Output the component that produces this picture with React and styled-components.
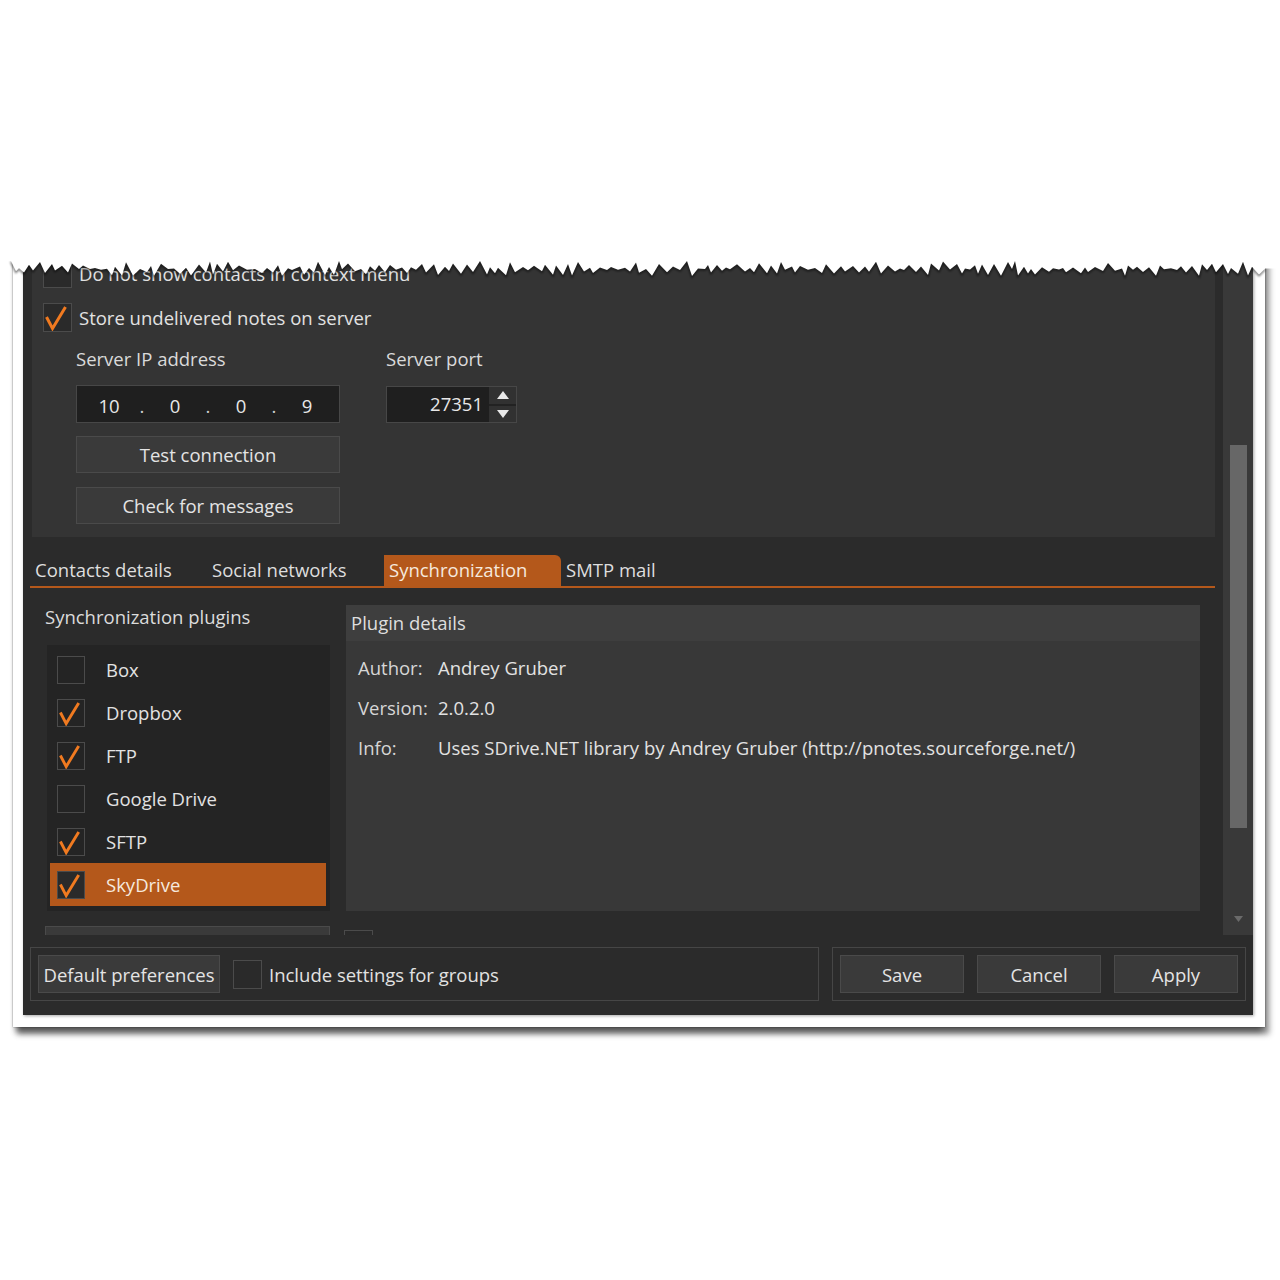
import React from 'react';
import styled, { createGlobalStyle } from 'styled-components';

const ORANGE = '#b4581b';
const PAPER_W = 1252;
const PAGE_LEFT = 13;

const GlobalStyle = createGlobalStyle`
  html, body {
    margin: 0;
    padding: 0;
    background: #ffffff;
  }
  body {
    font-family: "Open Sans", "Noto Sans", "DejaVu Sans", sans-serif;
    font-size: 18.5px;
    color: #e2e2e2;
    min-height: 1280px;
  }
  * {
    box-sizing: border-box;
  }
`;

// jagged line of the torn top edge, in coordinates of the overlay svg
const tornPoints = (() => {
  let seed = 11;
  const rnd = () => {
    seed = (seed * 16807) % 2147483647;
    return seed / 2147483647;
  };
  const pts = [];
  let i = 0;
  for (let x = 0; x <= PAPER_W + 4; x += 3 + Math.round(rnd() * 5)) {
    const y = i % 2 ? 29 + rnd() * 7 : 21 + rnd() * 8;
    pts.push([x + PAGE_LEFT - 2, +y.toFixed(1)]);
    i++;
  }
  return pts;
})();
const tornLine = tornPoints.map(([x, y], i) => `${i ? 'L' : 'M'}${x} ${y}`).join(' ');
const tornFill = `M0 -10 L1280 -10 L1280 ${tornPoints[tornPoints.length - 1][1]} ${tornPoints
  .slice()
  .reverse()
  .map(([x, y]) => `L${x} ${y}`)
  .join(' ')} L0 ${tornPoints[0][1]} Z`;

const Page = styled.div`
  padding: 240px 0 40px ${PAGE_LEFT}px;
  width: ${PAPER_W + PAGE_LEFT + 15}px;
  position: relative;
`;

const Paper = styled.div`
  position: relative;
  width: ${PAPER_W}px;
  background: #ffffff;
  padding: 0 12px 12px 10px;
  box-shadow: 0 0 1.5px rgba(0, 0, 0, 0.5), 4px 7px 6px rgba(0, 0, 0, 0.45), 0 8px 6px -3px rgba(0, 0, 0, 0.4);
`;

const TornEdge = styled.svg`
  position: absolute;
  top: -10px;
  left: -${PAGE_LEFT}px;
  width: 1280px;
  height: 50px;
  display: block;
`;

const Window = styled.div`
  background: #2b2b2b;
  height: 775px;
  display: flex;
  flex-direction: column;
  box-shadow: 1px 1px 3px rgba(0, 0, 0, 0.35);
`;

const ScrollArea = styled.div`
  display: flex;
  height: 695px;
  flex-shrink: 0;
`;

const Viewport = styled.div`
  flex: 1;
  overflow: hidden;
  padding: 0 8px 0 7px;
`;

const Scrollbar = styled.div`
  width: 30px;
  background: #393939;
  display: flex;
  flex-direction: column;
  align-items: center;
  padding-top: 205px;
`;

const Thumb = styled.div`
  width: 17px;
  height: 383px;
  background: #676767;
`;

const ScrollArrow = styled.div`
  margin-top: auto;
  height: 32px;
  display: flex;
  align-items: center;
  justify-content: center;
`;

const SettingsPanel = styled.div`
  margin-left: 2px;
  background: #343434;
  padding: 18px 0 13px 11px;
`;

const CheckRow = styled.div`
  display: flex;
  align-items: center;
  gap: 7px;
  height: 30px;
  margin-bottom: 14px;
  white-space: nowrap;
`;

const Box = styled.span`
  flex-shrink: 0;
  width: ${(p) => p.$size}px;
  height: ${(p) => p.$size}px;
  background: ${(p) => p.$bg || '#2a2a2a'};
  border: 1px solid #4b4b4b;
  display: flex;
  align-items: center;
  justify-content: center;
`;

const CheckBox = ({ checked, size = 29, bg }) => (
  <Box $size={size} $bg={bg}>
    {checked && (
      <svg width={size - 2} height={size - 2} viewBox="0 0 27 27">
        <path d="M2.5 13 L8.5 24.5 L21.5 3" fill="none" stroke="#f07a20" strokeWidth="3" strokeLinecap="butt" strokeLinejoin="miter" />
      </svg>
    )}
  </Box>
);

const ServerFields = styled.div`
  display: flex;
  gap: 46px;
  margin-left: 33px;
`;

const Field = styled.div`
  display: flex;
  flex-direction: column;
  width: ${(p) => p.$width}px;
`;

const FieldLabel = styled.div`
  line-height: 26px;
  margin-bottom: 13px;
  color: #dadada;
  white-space: nowrap;
`;

const IpBox = styled.div`
  height: 38px;
  background: #1f1f1f;
  border: 1px solid #474747;
  display: grid;
  grid-template-columns: 56px 10px 56px 10px 56px 10px 56px;
  align-items: baseline;
  padding: 7px 0 0 4px;
  line-height: 26px;
`;

const IpPart = styled.span`
  text-align: center;
  color: ${(p) => (p.$dot ? '#cfcfcf' : '#e8e8e8')};
`;

const PortBox = styled.div`
  height: 37px;
  margin-top: 1px;
  border: 1px solid #474747;
  display: flex;
`;

const PortValue = styled.div`
  flex: 1;
  background: #1f1f1f;
  text-align: right;
  padding-right: 6px;
  line-height: 34px;
  color: #e8e8e8;
`;

const Spinner = styled.div`
  width: 27px;
  background: #313131;
  display: flex;
  flex-direction: column;
`;

const SpinHalf = styled.div`
  flex: 1;
  display: flex;
  align-items: center;
  justify-content: center;
  border-top: ${(p) => (p.$lower ? '2px solid #222' : 'none')};
`;

const Button = styled.button`
  height: ${(p) => p.$height || 37}px;
  width: ${(p) => (p.$width ? `${p.$width}px` : '100%')};
  margin-top: ${(p) => p.$top || 0}px;
  background: #3a3a3a;
  border: 1px solid #4a4a4a;
  color: #e4e4e4;
  font: inherit;
  padding: 0;
  flex-shrink: 0;
  white-space: nowrap;
`;

const TabStrip = styled.div`
  display: flex;
  margin-top: 18px;
  height: 33px;
  border-bottom: 2px solid ${ORANGE};
`;

const Tab = styled.div`
  width: 177px;
  height: 31px;
  line-height: 29px;
  padding-left: 5px;
  white-space: nowrap;
  background: ${(p) => (p.$active ? ORANGE : 'transparent')};
  color: ${(p) => (p.$active ? '#f6e9de' : '#dedede')};
  border-top-right-radius: 6px;
`;

const TabPage = styled.div`
  display: flex;
  gap: 16px;
  padding: 16px 0 0 15px;
`;

const Column = styled.div`
  display: flex;
  flex-direction: column;
  width: ${(p) => p.$width}px;
`;

const SectionLabel = styled.div`
  line-height: 26px;
  color: #dcdcdc;
`;

const PluginList = styled.div`
  margin: 15px 0 0 2px;
  background: #242424;
  padding: 3px 4px 5px 3px;
`;

const PluginRow = styled.div`
  display: flex;
  align-items: center;
  gap: 21px;
  height: 43px;
  padding-left: 7px;
  background: ${(p) => (p.$selected ? ORANGE : 'transparent')};
  color: ${(p) => (p.$selected ? '#f6e9de' : '#e2e2e2')};
`;

const Details = styled.div`
  margin-top: 1px;
  height: 306px;
  background: #383838;
  display: flex;
  flex-direction: column;
`;

const DetailsHeader = styled.div`
  height: 36px;
  line-height: 36px;
  padding-left: 5px;
  background: #3e3e3e;
  color: #dedede;
`;

const DetailsBody = styled.div`
  padding: 7px 0 0 12px;
`;

const DetailRow = styled.div`
  display: grid;
  grid-template-columns: 80px 1fr;
  line-height: 40px;
  white-space: nowrap;
`;

const DetailKey = styled.span`
  color: #d6d6d6;
`;

const PeekRow = styled.div`
  margin: 19px 0 0 -2px;
`;

const BottomBar = styled.div`
  display: flex;
  gap: 13px;
  padding: 12px 7px 14px 7px;
`;

const GroupBox = styled.div`
  height: 54px;
  border: 1px solid #464646;
  display: flex;
  align-items: center;
  padding: 0 7px;
  gap: 13px;
  flex: ${(p) => (p.$grow ? 1 : '0 0 auto')};
  width: ${(p) => (p.$width ? `${p.$width}px` : 'auto')};
`;

const InlineCheck = styled.div`
  display: flex;
  align-items: center;
  gap: 7px;
  white-space: nowrap;
`;

const plugins = [
  { name: 'Box', checked: false },
  { name: 'Dropbox', checked: true },
  { name: 'FTP', checked: true },
  { name: 'Google Drive', checked: false },
  { name: 'SFTP', checked: true },
  { name: 'SkyDrive', checked: true, selected: true },
];

const tabs = ['Contacts details', 'Social networks', 'Synchronization', 'SMTP mail'];

const Triangle = ({ up, color = '#e8e8e8', w = 12, h = 8 }) => (
  <svg width={w} height={h} viewBox="0 0 12 8">
    <path d={up ? 'M6 0 L12 8 L0 8 Z' : 'M0 0 L12 0 L6 8 Z'} fill={color} />
  </svg>
);

export default function App() {
  return (
    <>
      <GlobalStyle />
      <Page>
        <Paper>
          <Window>
            <ScrollArea>
              <Viewport>
                <SettingsPanel>
                  <CheckRow>
                    <CheckBox />
                    <span>Do not show contacts in context menu</span>
                  </CheckRow>
                  <CheckRow>
                    <CheckBox checked />
                    <span>Store undelivered notes on server</span>
                  </CheckRow>
                  <ServerFields>
                    <Field $width={264}>
                      <FieldLabel>Server IP address</FieldLabel>
                      <IpBox>
                        <IpPart>10</IpPart>
                        <IpPart $dot>.</IpPart>
                        <IpPart>0</IpPart>
                        <IpPart $dot>.</IpPart>
                        <IpPart>0</IpPart>
                        <IpPart $dot>.</IpPart>
                        <IpPart>9</IpPart>
                      </IpBox>
                      <Button $top={13}>Test connection</Button>
                      <Button $top={14}>Check for messages</Button>
                    </Field>
                    <Field $width={131}>
                      <FieldLabel>Server port</FieldLabel>
                      <PortBox>
                        <PortValue>27351</PortValue>
                        <Spinner>
                          <SpinHalf>
                            <Triangle up />
                          </SpinHalf>
                          <SpinHalf $lower>
                            <Triangle />
                          </SpinHalf>
                        </Spinner>
                      </PortBox>
                    </Field>
                  </ServerFields>
                </SettingsPanel>

                <TabStrip>
                  {tabs.map((t) => (
                    <Tab key={t} $active={t === 'Synchronization'}>
                      {t}
                    </Tab>
                  ))}
                </TabStrip>

                <TabPage>
                  <Column $width={285}>
                    <SectionLabel>Synchronization plugins</SectionLabel>
                    <PluginList>
                      {plugins.map((p) => (
                        <PluginRow key={p.name} $selected={p.selected}>
                          <CheckBox size={28} checked={p.checked} bg={p.selected ? '#2a2a2a' : '#242424'} />
                          <span>{p.name}</span>
                        </PluginRow>
                      ))}
                    </PluginList>
                    <Button $top={15} $height={37} aria-label="Plugin actions" />
                  </Column>
                  <Column $width={854}>
                    <Details>
                      <DetailsHeader>Plugin details</DetailsHeader>
                      <DetailsBody>
                        <DetailRow>
                          <DetailKey>Author:</DetailKey>
                          <span>Andrey Gruber</span>
                        </DetailRow>
                        <DetailRow>
                          <DetailKey>Version:</DetailKey>
                          <span>2.0.2.0</span>
                        </DetailRow>
                        <DetailRow>
                          <DetailKey>Info:</DetailKey>
                          <span>Uses SDrive.NET library by Andrey Gruber (http://pnotes.sourceforge.net/)</span>
                        </DetailRow>
                      </DetailsBody>
                    </Details>
                    <PeekRow>
                      <CheckBox />
                    </PeekRow>
                  </Column>
                </TabPage>
              </Viewport>
              <Scrollbar>
                <Thumb />
                <ScrollArrow>
                  <Triangle color="#6a6a6a" w={11} h={6} />
                </ScrollArrow>
              </Scrollbar>
            </ScrollArea>

            <BottomBar>
              <GroupBox $grow>
                <Button $width={182} $height={38}>Default preferences</Button>
                <InlineCheck>
                  <CheckBox />
                  <span>Include settings for groups</span>
                </InlineCheck>
              </GroupBox>
              <GroupBox $width={414}>
                <Button $width={124} $height={38}>Save</Button>
                <Button $width={124} $height={38}>Cancel</Button>
                <Button $width={124} $height={38}>Apply</Button>
              </GroupBox>
            </BottomBar>
          </Window>
          <TornEdge viewBox="0 -10 1280 50" aria-hidden="true">
            <defs>
              <filter id="edgeBlur" x="-1%" y="-50%" width="102%" height="200%">
                <feGaussianBlur stdDeviation="0.9" />
              </filter>
            </defs>
            <path d={tornLine} fill="none" stroke="rgba(0,0,0,0.55)" strokeWidth="2" transform="translate(0 0.8)" filter="url(#edgeBlur)" />
            <path d={tornFill} fill="#ffffff" />
          </TornEdge>
        </Paper>
      </Page>
    </>
  );
}
